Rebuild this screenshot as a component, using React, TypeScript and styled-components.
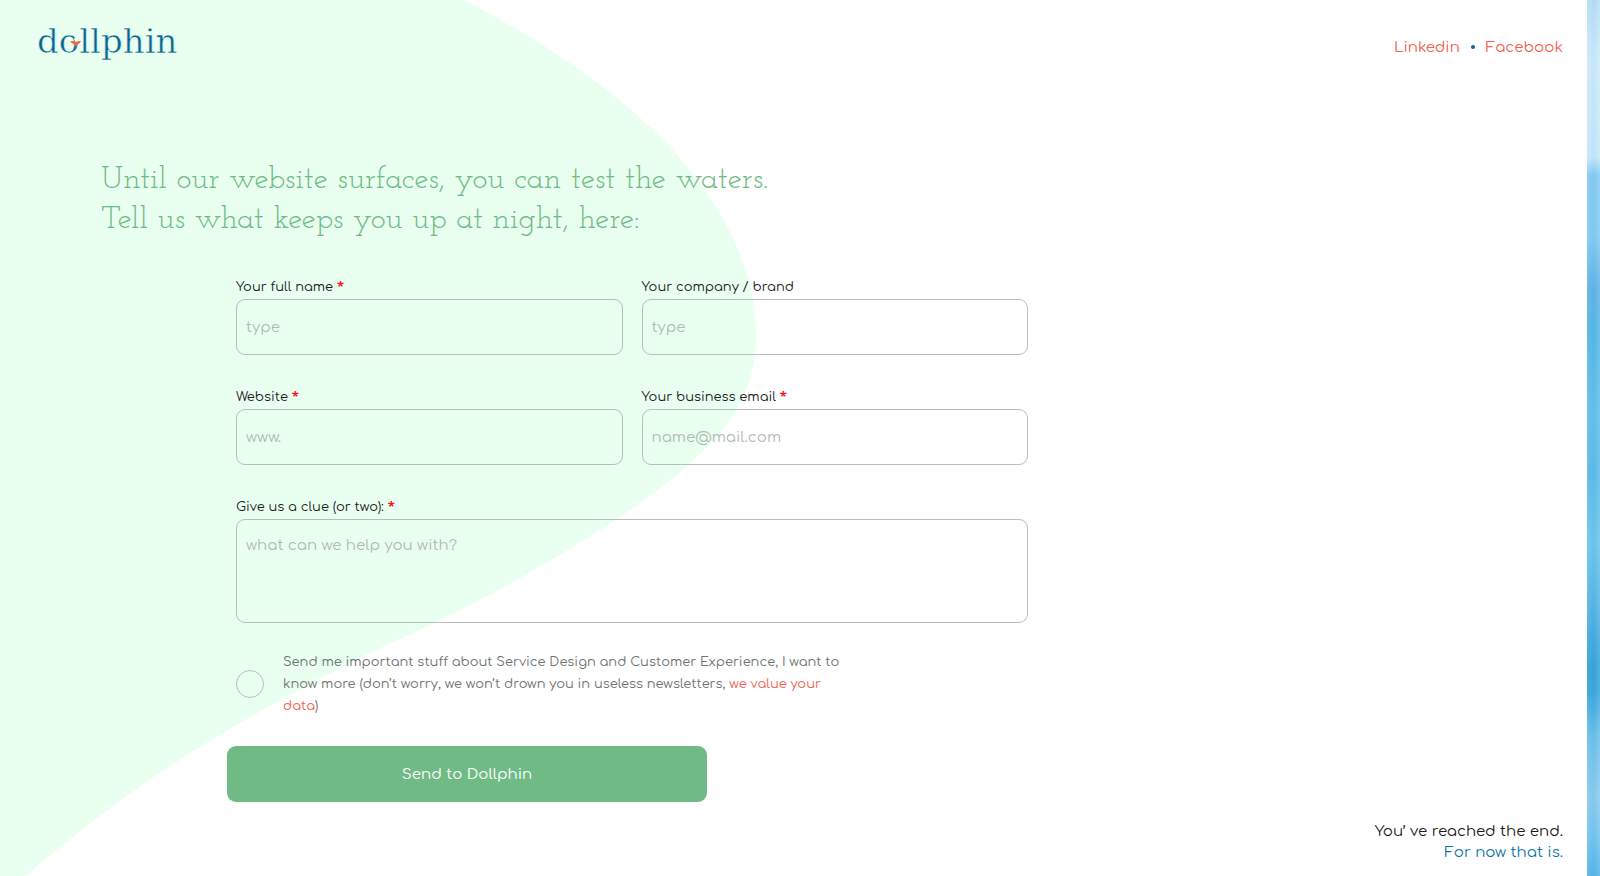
import React from "react";
import styled, { createGlobalStyle } from "styled-components";

const colors = {
  mint: "#e9fff0",
  green: "#70bb85",
  coral: "#ee6352",
  navy: "#0b6592",
  blue: "#0f76a8",
  ink: "#1c1c1c",
  muted: "#6f7472",
  border: "#b9bfbd",
  placeholder: "#b3bbb7",
};

const GlobalStyle = createGlobalStyle`
  *, *::before, *::after { box-sizing: border-box; }
  body {
    margin: 0;
    background: #fff;
    color: ${colors.ink};
    font-family: Comfortaa, Inter, "Open Sans", sans-serif;
    font-size: 15px;
  }
`;

const Page = styled.div`
  display: grid;
  grid-template-columns: minmax(0, 1fr) 13px;
  min-height: 100vh;
`;

const Content = styled.div`
  position: relative;
  isolation: isolate;
  display: flex;
  flex-direction: column;
`;

const Blob = styled.svg`
  position: absolute;
  z-index: -1;
  top: 0;
  left: 0;
  height: 100%;
  fill: ${colors.mint};
`;

const Water = styled.div`
  background:
    linear-gradient(90deg, rgba(255, 255, 255, 0.08), rgba(0, 110, 190, 0.03) 50%, rgba(255, 255, 255, 0.14)),
    linear-gradient(
      174deg,
      #b5def5 0%,
      #cdeaf8 7%,
      #c6e7f9 18%,
      #86cbf0 20%,
      #83caf1 27%,
      #5fb3e5 33%,
      #55b7e4 38%,
      #62c0e9 47%,
      #5bbbe6 54%,
      #6bc6ec 62%,
      #52b2e1 70%,
      #36a2d9 76%,
      #3ba6dc 79%,
      #6bbfe8 84%,
      #8acbed 91%,
      #6fc2ee 96%,
      #54b3e6 100%
    );
`;

const Header = styled.header`
  display: flex;
  justify-content: space-between;
  align-items: center;
  height: 94px;
  padding: 0 24px 0 38px;
`;

const HomeLink = styled.a`
  display: block;
  line-height: 0;
`;

const LogoArt = styled.svg`
  overflow: visible;
`;

const Wordmark = styled.text`
  font-family: "DejaVu Serif", serif;
  font-size: 34px;
  fill: ${colors.navy};
  stroke: ${colors.mint};
  stroke-width: 0.5;
`;

const Social = styled.nav`
  display: flex;
  align-items: center;
  gap: 11px;
`;

const Dot = styled.span`
  width: 4px;
  height: 4px;
  border-radius: 50%;
  background: ${colors.navy};
`;

const TextLink = styled.a`
  color: ${colors.coral};
  text-decoration: none;
`;

const Title = styled.h1`
  margin: 66px 24px 0 101px;
  color: ${colors.green};
  font-family: "Josefin Slab", "Liberation Serif", serif;
  font-size: 32px;
  font-weight: 400;
  line-height: 40px;
`;

const Form = styled.form`
  display: grid;
  grid-template-columns: repeat(2, minmax(0, 1fr));
  column-gap: 19px;
  row-gap: 32px;
  max-width: 792px;
  margin: 37px 24px 0 236px;
`;

const Field = styled.div<{ $wide?: boolean }>`
  display: flex;
  flex-direction: column;
  gap: 2px;
  grid-column: ${(p) => (p.$wide ? "1 / -1" : "auto")};
`;

const Label = styled.label`
  font-size: 13px;
  line-height: 20px;
`;

const Star = styled.span`
  color: #f01818;
  font-family: "Open Sans", sans-serif;
  font-weight: 700;
  line-height: 1;
`;

const Input = styled.input`
  width: 100%;
  height: 56px;
  padding: 0 9px;
  border: 1px solid ${colors.border};
  border-radius: 9px;
  background: transparent;
  color: ${colors.ink};
  font: inherit;
  &::placeholder { color: ${colors.placeholder}; opacity: 1; }
`;

const TextArea = styled(Input)`
  display: block;
  height: 104px;
  padding: 15px 9px;
  line-height: 22px;
  resize: none;
`;

const Consent = styled.div`
  display: flex;
  align-items: center;
  gap: 19px;
  grid-column: 1 / -1;
  max-width: 620px;
  margin-top: -4px;
`;

const Check = styled.input`
  appearance: none;
  flex: none;
  width: 28px;
  height: 28px;
  margin: 0;
  border: 1px solid ${colors.border};
  border-radius: 50%;
  &:checked { background: ${colors.green}; }
`;

const ConsentText = styled.label`
  color: ${colors.muted};
  font-size: 13px;
  line-height: 22px;
`;

const Submit = styled.button`
  grid-column: 1 / -1;
  width: 480px;
  max-width: 100%;
  height: 56px;
  margin: -3px 0 0 -9px;
  border: 0;
  border-radius: 9px;
  background: ${colors.green};
  color: #fff;
  font: inherit;
`;

const Footer = styled.footer`
  margin-top: auto;
  padding: 12px 24px 13px;
  line-height: 21px;
  text-align: right;
`;

const FooterLine = styled.p<{ $color?: string }>`
  margin: 0;
  color: ${(p) => p.$color ?? "inherit"};
`;

type FieldProps = {
  id: string;
  label: string;
  placeholder: string;
  required?: boolean;
  type?: string;
  multiline?: boolean;
};

function FormField({ id, label, placeholder, required, type = "text", multiline }: FieldProps) {
  return (
    <Field $wide={multiline}>
      <Label htmlFor={id}>
        {label} {required && <Star>*</Star>}
      </Label>
      {multiline ? (
        <TextArea as="textarea" id={id} placeholder={placeholder} required={required} />
      ) : (
        <Input id={id} type={type} placeholder={placeholder} required={required} />
      )}
    </Field>
  );
}

function Logo() {
  return (
    <HomeLink href="#" aria-label="dollphin">
      <LogoArt width="142" height="44" viewBox="0 0 142 44">
        <Wordmark x="-1" y="28">dollphin</Wordmark>
        {/* gap in the ring of the o, with the dolphin's tail in it */}
        <path d="M36 13 L41 13 L41 18 L37 18 Z" fill={colors.mint} />
        <path d="M32 16.500 Q35.500 15.500 38 17 Q40 15.500 43 16 Q42 18.500 39.500 19.500 L37.500 22 L36.500 19.500 Q34 18.500 32 16.500 Z" fill={colors.coral} />
      </LogoArt>
    </HomeLink>
  );
}

export default function App() {
  return (
    <Page>
      <GlobalStyle />
      <Content>
        <Blob viewBox="0 0 756 876" preserveAspectRatio="xMinYMin meet" aria-hidden="true">
          <path d="M0 0H464C560 50 626 100 673 150C730 215 756 275 756 335C756 400 722 440 658 490C590 540 520 580 437 622C360 656 290 693 220 735C150 775 80 830 25 876H0Z" />
        </Blob>
        <Header>
          <Logo />
          <Social>
            <TextLink href="#linkedin">Linkedin</TextLink>
            <Dot />
            <TextLink href="#facebook">Facebook</TextLink>
          </Social>
        </Header>
        <main>
          <Title>
            Until our website surfaces, you can test the waters.
            <br />
            Tell us what keeps you up at night, here:
          </Title>
          <Form onSubmit={(e) => e.preventDefault()}>
            <FormField id="name" label="Your full name" placeholder="type" required />
            <FormField id="company" label="Your company / brand" placeholder="type" />
            <FormField id="website" label="Website" placeholder="www." required />
            <FormField id="email" type="email" label="Your business email" placeholder="name@mail.com" required />
            <FormField id="clue" label="Give us a clue (or two):" placeholder="what can we help you with?" required multiline />
            <Consent>
              <Check id="consent" type="checkbox" />
              <ConsentText htmlFor="consent">
                Send me important stuff about Service Design and Customer Experience, I want to know more (don’t
                worry, we won’t drown you in useless newsletters, <TextLink href="#privacy">we value your data</TextLink>)
              </ConsentText>
            </Consent>
            <Submit type="submit">Send to Dollphin</Submit>
          </Form>
        </main>
        <Footer>
          <FooterLine>You’ ve reached the end.</FooterLine>
          <FooterLine $color={colors.blue}>For now that is.</FooterLine>
        </Footer>
      </Content>
      <Water />
    </Page>
  );
}
